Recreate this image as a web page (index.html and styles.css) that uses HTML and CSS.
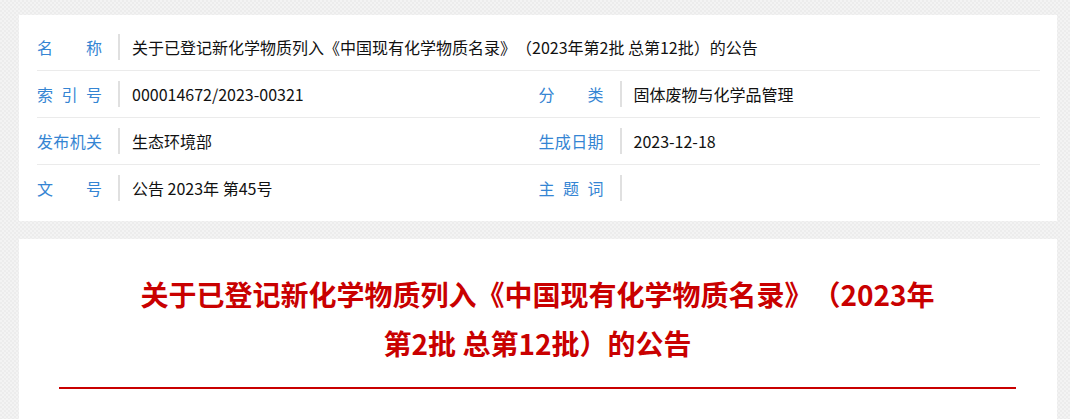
FILE: index.html
```html
<!DOCTYPE html>
<html lang="zh-CN">
<head>
<meta charset="utf-8">
<title>关于已登记新化学物质列入《中国现有化学物质名录》的公告</title>
<link rel="stylesheet" href="styles.css">
</head>
<body>
<div class="page">
  <section class="card meta">
    <div class="row">
      <div class="cell full">
        <span class="label">名称</span>
        <span class="sep"></span>
        <span class="value">关于已登记新化学物质列入《中国现有化学物质名录》（2023年第2批 总第12批）的公告</span>
      </div>
    </div>
    <div class="row">
      <div class="cell">
        <span class="label">索引号</span>
        <span class="sep"></span>
        <span class="value">000014672/2023-00321</span>
      </div>
      <div class="cell">
        <span class="label">分类</span>
        <span class="sep"></span>
        <span class="value">固体废物与化学品管理</span>
      </div>
    </div>
    <div class="row">
      <div class="cell">
        <span class="label">发布机关</span>
        <span class="sep"></span>
        <span class="value">生态环境部</span>
      </div>
      <div class="cell">
        <span class="label">生成日期</span>
        <span class="sep"></span>
        <span class="value">2023-12-18</span>
      </div>
    </div>
    <div class="row last">
      <div class="cell">
        <span class="label">文号</span>
        <span class="sep"></span>
        <span class="value">公告 2023年 第45号</span>
      </div>
      <div class="cell">
        <span class="label">主题词</span>
        <span class="sep"></span>
        <span class="value"></span>
      </div>
    </div>
  </section>
  <section class="card article">
    <h1 class="title">关于已登记新化学物质列入《中国现有化学物质名录》（2023年第2批 总第12批）的公告</h1>
    <div class="rule"></div>
  </section>
</div>
</body>
</html>
```
FILE: styles.css
```css
html, body {
  margin: 0;
  padding: 0;
}
body {
  background-color: #efefef;
  background-image: repeating-conic-gradient(#ececec 0 25%, #f3f3f3 0 50%);
  background-size: 4px 4px;
  font-family: "Noto Sans CJK SC", "Noto Sans", sans-serif;
  color: #111;
  height: 419px;
  overflow: hidden;
  text-spacing-trim: space-all;
}
.page {
  width: 1038px;
  margin-left: 19px;
  padding-top: 15px;
  display: flex;
  flex-direction: column;
  gap: 18px;
}
.card {
  background: #fff;
}
.meta {
  padding: 9px 17px 10px 18px;
}
.row {
  display: flex;
  height: 46px;
  border-bottom: 1px solid #ebebeb;
}
.row.last {
  border-bottom: none;
}
.cell {
  flex: 1 1 0;
  display: flex;
  align-items: center;
  min-width: 0;
}
.cell.full {
  flex: 1 1 100%;
}
.label {
  width: 65px;
  flex: none;
  font-size: 16px;
  color: #3585d3;
  text-align: justify;
  text-align-last: justify;
  line-height: 20px;
}
.sep {
  flex: none;
  width: 2px;
  height: 26px;
  background: #e0e0e0;
  margin: 0 12px 0 16px;
}
.value {
  font-size: 16px;
  line-height: 20px;
  color: #111;
  white-space: nowrap;
}
.article {
  padding: 31px 41px 0 40px;
  height: 300px;
}
.title {
  margin: 0 auto;
  max-width: 805px;
  text-align: center;
  font-size: 28px;
  line-height: 49px;
  font-weight: 700;
  color: #c90000;
}
.rule {
  margin-top: 19px;
  height: 2px;
  background: #c90000;
}
```
